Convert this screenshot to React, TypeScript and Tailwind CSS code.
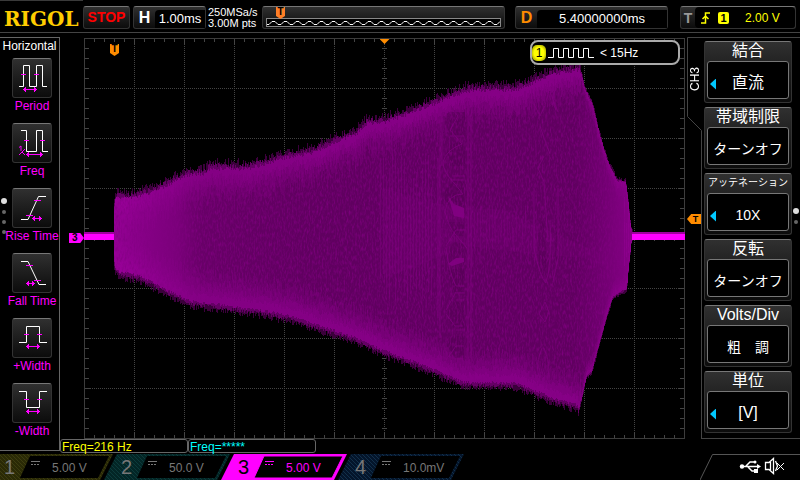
import type { ReactNode } from "react";

type Point = [number, number];

const UPPER: Point[] = [
  [30, 172], [31, 160], [33, 156], [46, 157], [69, 151], [86, 142], [103, 134], [121, 132],
  [126, 127], [163, 127], [183, 122], [203, 116], [229, 111], [249, 102], [273, 92], [283, 82],
  [296, 82], [323, 73], [351, 62], [383, 49], [434, 48], [449, 41], [469, 33], [496, 28],
  [501, 49], [509, 66], [516, 96], [524, 122], [533, 141], [542, 143], [544, 158], [547, 188], [550, 198],
];

const LOWER: Point[] = [
  [30, 226], [32, 235], [36, 238], [56, 242], [81, 255], [106, 267], [131, 270], [176, 276],
  [206, 282], [246, 295], [281, 307], [296, 315], [323, 325], [349, 335], [379, 348], [433, 349],
  [469, 364], [493, 371], [495, 375], [500, 352], [503, 339], [508, 335], [514, 312], [523, 279],
  [529, 260], [543, 252], [545, 229], [548, 202], [550, 200],
];

function levelAt(points: Point[], x: number): number {
  for (let i = 1; i < points.length; i++) {
    const [x0, y0] = points[i - 1];
    const [x1, y1] = points[i];
    if (x <= x1) return y0 + ((y1 - y0) * (x - x0)) / (x1 - x0);
  }
  return points[points.length - 1][1];
}

function randomSource(seed: number) {
  let state = seed;
  return () => {
    state = (state * 1664525 + 1013904223) % 4294967296;
    return state / 4294967296;
  };
}

function band(inset: number, jitter: number, seed: number): string {
  const random = randomSource(seed);
  let d = "";
  for (let x = 30; x < 550; x++) {
    const side = x > 496 ? 0.45 : 1;
    const top = levelAt(UPPER, x + 0.5) + (inset + (random() - 0.6) * jitter) * side;
    const bottom = levelAt(LOWER, x + 0.5) - (inset + (random() - 0.5) * jitter * 0.7) * side;
    if (bottom > top) d += `M${x} ${top.toFixed(1)}h1V${bottom.toFixed(1)}h-1z`;
  }
  return d;
}

const LAYERS = [
  { fill: "#3b003b", d: band(-2, 8, 11) },
  { fill: "#650065", d: band(1, 5, 23) },
  { fill: "#860086", d: band(4, 4, 37) },
  { fill: "#7e007e", d: band(12, 7, 41) },
  { fill: "#740074", d: band(18, 9, 53) },
  { fill: "#6a006a", d: band(25, 12, 67) },
  { fill: "#600060", d: band(34, 16, 71) },
];

function streaks(from: number, to: number, step: number, top: number, bottom: number, seed: number): string {
  const random = randomSource(seed);
  let d = "";
  for (let x = from; x < to; x += step) {
    const a = top + random() * 40;
    const b = bottom - random() * 40;
    d += `M${x + 0.5} ${a.toFixed(0)}V${b.toFixed(0)}`;
  }
  return d;
}

const SMALL_STEPS_X = Array.from({ length: 59 }, (_, i) => (i + 1) * 10 + 0.5);
const SMALL_STEPS_Y = Array.from({ length: 39 }, (_, i) => (i + 1) * 10 + 0.5);
const isMajor = (v: number) => (v - 0.5) % 50 === 0;

const TICKS =
  SMALL_STEPS_X.map((x) => {
    const n = isMajor(x) ? 6 : 4;
    return `M${x} 0v${n}M${x} 401v-${n}M${x} 198v5`;
  }).join("") +
  SMALL_STEPS_Y.map((y) => {
    const n = isMajor(y) ? 7 : 5;
    return `M0 ${y}h${n}M601 ${y}h-${n}M298 ${y}h5`;
  }).join("");

const DOTS =
  SMALL_STEPS_X.filter(isMajor).map((x) => `M${x} 0V401`).join("") +
  SMALL_STEPS_Y.filter(isMajor).map((y) => `M0 ${y}H601`).join("");

function Waveform() {
  return (
    <svg viewBox="0 0 601 401" preserveAspectRatio="none" className="block h-[401px] w-full" aria-label="Channel 3 trace">
      <defs>
        <filter id="grain" x="0" y="0" width="1" height="1">
          <feTurbulence type="fractalNoise" baseFrequency="0.6 0.22" numOctaves="2" seed="4" />
          <feColorMatrix values="0 0 0 0 0.22  0 0 0 0 0  0 0 0 0 0.22  1.8 0 0 0 -0.76" />
          <feComposite operator="in" in2="SourceGraphic" />
        </filter>
        <linearGradient id="onset" gradientUnits="userSpaceOnUse" x1="30" x2="240" y1="0" y2="0">
          <stop offset="0" stopColor="#9c009c" stopOpacity="0.85" />
          <stop offset="0.3" stopColor="#8c008c" stopOpacity="0.6" />
          <stop offset="0.42" stopColor="#800080" stopOpacity="0.25" />
          <stop offset="1" stopColor="#700070" stopOpacity="0" />
        </linearGradient>
        <linearGradient id="tail" gradientUnits="userSpaceOnUse" x1="490" x2="546" y1="0" y2="0">
          <stop offset="0" stopColor="#800080" stopOpacity="0" />
          <stop offset="1" stopColor="#900090" stopOpacity="0.8" />
        </linearGradient>
        <clipPath id="body">
          <path d={LAYERS[2].d} />
        </clipPath>
      </defs>
      <path d={DOTS} stroke="#444" strokeDasharray="1 1" fill="none" shapeRendering="crispEdges" />
      <path d={TICKS} stroke="#444" fill="none" shapeRendering="crispEdges" />
      <rect x="0.5" y="0.5" width="600" height="400" fill="none" stroke="#3c3c3c" shapeRendering="crispEdges" />
      <g shapeRendering="crispEdges">
        {LAYERS.map((layer) => (
          <path key={layer.fill} d={layer.d} fill={layer.fill} />
        ))}
      </g>
      <g clipPath="url(#body)">
        <rect x="30" y="100" width="210" height="210" fill="url(#onset)" />
        <rect x="490" y="60" width="60" height="280" fill="url(#tail)" />
        <path d="M300 150L350 165L384 170L420 172L470 195L515 215L540 170V240L500 220L440 215L384 208L300 240Z" fill="#7c007c" opacity="0.22" />
        <path d={streaks(296, 350, 3, 110, 270, 5)} stroke="#7c007c" opacity="0.5" fill="none" />
        <path d={streaks(384, 452, 3, 165, 230, 9)} stroke="#7c007c" opacity="0.4" fill="none" />
        <path d={streaks(540, 548, 2, 150, 250, 3)} stroke="#960096" opacity="0.5" fill="none" />
        <path
          d="M365 74q-6 6-3 14l6 10h13V74zM368 104l-5 10l6 14h12v-22zM370 142l-10 12q-2 8 8 14h12v-24zM362 184l8 14h10v-14zM370 204l-7 12l6 2l11-4v-8zM364 232l6 22h10v-24zM370 264l-8 12l8 14h10v-26zM369 298l-6 10l8 12h9v-22z"
          fill="#560056"
          opacity="0.6"
        />
        <path d="M459 180l3 20v28l-3 10l-5-12v-30zM472 184l2 18v22l-4-6z" fill="#560056" opacity="0.6" />
        <g fill="none" stroke="#7e007e" opacity="0.8">
          <path d="M360 78q6-12 14 0l-8 14l12 14q-16 6-19 18q0 10 12 22l8 10q-16 0-18 18q4 16 10 22l12 14M366 98h14M368 138h13M368 142h12M358 68v60M384 60v280M387 80v240M356 100v200M354 120v160" />
          <path d="M362 208l10-16h9M362 210q4 28 10 38h8M372 255h9M372 262h8M362 272l10-18M362 276l9 12h8M372 292h9M362 322l10-14h8M362 326l8 16h9" />
          <path d="M452 56q6-12 12 0q-2 12-8 22l-6-12M466 54l8 20M472 50q-6 12 0 22M456 88l4 12l6 16M460 118l-6 12l6 14l4 60M450 150v60q6 30 12 35q6-20 4-60M474 150v70l-5 24M461 264l-6 12l6 8l4-10zM458 310q-10 24 2 38q10-14 0-38" />
        </g>
        <path d="M364 158l6 8l10 4v10l-10-2zM364 226l8-6h8v4l-12 4z" fill="#8c008c" opacity="0.7" />
        <path d={LAYERS[1].d} fill="#fff" filter="url(#grain)" />
      </g>
      <g shapeRendering="crispEdges">
        <path d="M0 194h30v2H0zM548 194h53v2h-53z" fill="#a000a0" />
        <path d="M0 196h30v6H0zM548 196h53v6h-53z" fill="#ff00ff" />
      </g>
    </svg>
  );
}

function Arrow({ from, to, y }: { from: number; to: number; y: number }) {
  return (
    <path
      d={`M${from} ${y + 0.5}H${to}M${from + 2.5} ${y - 2}v5M${from + 1.5} ${y - 1}v3M${to - 2.5} ${y - 2}v5M${to - 1.5} ${y - 1}v3`}
      stroke="#ff00ff"
      fill="none"
      shapeRendering="crispEdges"
    />
  );
}

function Glyph({ line, ticks, arrow, children }: { line: string; ticks: string; arrow: [number, number, number]; children?: ReactNode }) {
  return (
    <svg viewBox="0 0 38 38" className="size-[38px]" aria-hidden="true">
      <g transform="translate(-1 -1)">
        <path d={line} stroke="#fff" fill="none" />
        <path d={ticks} stroke="#ff00ff" fill="none" shapeRendering="crispEdges" />
        <Arrow from={arrow[0]} to={arrow[1]} y={arrow[2]} />
        {children}
      </g>
    </svg>
  );
}

const MEASURES: { label: string; glyph: ReactNode }[] = [
  {
    label: "Period",
    glyph: <Glyph line="M7 28.5H11.5V7.5H17.5V28.5H24.5V7.5H30.5V28.5H35" ticks="M9 16.5h5M22 16.5h5" arrow={[11, 25, 31]} />,
  },
  {
    label: "Freq",
    glyph: (
      <Glyph line="M9 7.5H14.5V28.5H24.5V7.5H30.5V28.5H36" ticks="M12 17.5h5M28 17.5h5" arrow={[14, 31, 31]}>
        <path d="M7 24.500l2-1.500v5M7 32l6-6M10 29l3 3" stroke="#ff00ff" fill="none" />
      </Glyph>
    ),
  },
  {
    label: "Rise Time",
    glyph: <Glyph line="M9 31.5H16L26.500 8.500H34" ticks="M22 12.5h7M14 27.5h7" arrow={[20, 30, 30]} />,
  },
  {
    label: "Fall Time",
    glyph: <Glyph line="M9 8.500H16L27 31.500H34" ticks="M14 12.5h7M22 27.5h7" arrow={[14, 23, 30]} />,
  },
  {
    label: "+Width",
    glyph: <Glyph line="M7 24.5H14.5V8.5H27.5V24.5H35" ticks="M12 16.5h5M25 16.5h5" arrow={[14, 28, 28]} />,
  },
  {
    label: "-Width",
    glyph: <Glyph line="M7 8.5H14.5V24.5H27.5V8.5H35" ticks="M12 16.5h5M25 16.5h5" arrow={[14, 28, 28]} />,
  },
];

const MENU = [
  { title: "結合", value: "直流", size: "text-base", arrow: true },
  { title: "帯域制限", value: "ターンオフ", size: "text-sm", arrow: false },
  { title: "アッテネーション", value: "10X", size: "text-sm", arrow: true, small: true },
  { title: "反転", value: "ターンオフ", size: "text-sm", arrow: false },
  { title: "Volts/Div", value: "粗\u3000調", size: "text-sm", arrow: false },
  { title: "単位", value: "[V]", size: "text-base", arrow: true },
];

const CHANNELS = [
  { id: 1, scale: "5.00 V", base: "#2a2a06", stripe: "#3d3d10", edge: "#33330a", active: false },
  { id: 2, scale: "50.0 V", base: "#032626", stripe: "#0c3b3b", edge: "#063030", active: false },
  { id: 3, scale: "5.00 V", base: "#ff00ff", stripe: "#ff00ff", edge: "#ff00ff", active: true },
  { id: 4, scale: "10.0mV", base: "#04152b", stripe: "#12304a", edge: "#0a2440", active: false },
];

const PANEL = "rounded-[3px] border border-[#333] border-t-[#777] bg-linear-to-b from-[#303030] to-[#0c0c0c]";

function Readout({ tag, tagClass, width, children }: { tag: string; tagClass: string; width: string; children: ReactNode }) {
  return (
    <button type="button" className={`flex h-[23px] shrink-0 items-stretch ${width} ${PANEL}`}>
      <span className={`w-[21px] text-center text-base leading-[21px] font-bold ${tagClass}`}>{tag}</span>
      <span className="mt-[3px] flex flex-1 items-center justify-center rounded-tl-sm bg-black">{children}</span>
    </button>
  );
}

function Flag({ className }: { className: string }) {
  return (
    <span className={`flex h-[12px] w-[9px] justify-center text-[10px] leading-[10px] font-bold text-black [clip-path:polygon(0_0,100%_0,100%_75%,50%_100%,0_75%)] ${className}`}>
      T
    </span>
  );
}

function Header() {
  return (
    <header className="flex h-[33px] items-center border-b border-[#444] pr-1">
      <h1 className="flex h-full w-[83px] shrink-0 items-center border-t border-[#3a3a3a] pt-1 pl-1 font-['DejaVu_Serif',serif] text-[20px] font-bold text-[#fc0]">RIGOL</h1>
      <button type="button" className={`mt-[3px] h-[23px] w-[47px] shrink-0 text-sm leading-[21px] font-bold text-[#f00] ${PANEL}`}>STOP</button>
      <div className="mt-[3px] ml-[3px] flex flex-1 items-center">
        <Readout tag="H" tagClass="text-white" width="w-[73px]">
          <span className="text-[13px]">1.00ms</span>
        </Readout>
        <p className="ml-[2px] w-[54px] shrink-0 text-[11px] leading-[11px] whitespace-nowrap">
          250MSa/s
          <br />
          3.00M pts
        </p>
        <div className={`relative h-[23px] min-w-0 flex-1 px-[3px] pt-[11px] ${PANEL}`}>
          <svg className="block h-[9px] w-full border border-[#888] bg-black" aria-label="Memory">
            <defs>
              <pattern id="memory" width="12" height="7" patternUnits="userSpaceOnUse">
                <path d="M0 5.500H2L5 2.500H8L11 5.500H12" stroke="#fff" fill="none" />
              </pattern>
            </defs>
            <rect width="100%" height="7" fill="url(#memory)" />
          </svg>
          <Flag className="absolute top-0 left-[13px] bg-[#ff7f27]" />
        </div>
        <div className="ml-[10px] flex gap-3">
          <Readout tag="D" tagClass="text-[#ff8c00]" width="w-[153px]">
            <span className="text-[13px]">5.40000000ms</span>
          </Readout>
          <button type="button" className={`flex h-[23px] w-[116px] items-center text-[#ff0] ${PANEL}`}>
            <span className="w-[14px] text-center text-sm font-bold text-[#999]">T</span>
            <span className="flex h-full flex-1 items-center rounded-sm bg-black pl-[6px]">
              <svg viewBox="0 0 9 12" className="h-3 w-[9px]" aria-hidden="true">
                <path d="M0 11H4.500V1H9M1.500 7L4.500 4L7.500 7" stroke="#ff0" strokeWidth="1.500" fill="none" />
              </svg>
              <span className="ml-2 h-[12px] w-[11px] rounded-[2px] bg-[#ff0] text-center text-[11px] leading-[12px] font-bold text-black">1</span>
              <span className="ml-4 text-xs">2.00 V</span>
            </span>
          </button>
        </div>
      </div>
    </header>
  );
}

function Dots({ count, className }: { count: number; className: string }) {
  return (
    <div className={`absolute flex flex-col items-center gap-[6px] ${className}`} aria-hidden="true">
      <span className="size-[6px] rounded-full bg-[#ddd]" />
      {Array.from({ length: count }, (_, i) => (
        <span key={i} className="size-1 rounded-full bg-[#666]" />
      ))}
    </div>
  );
}

function Sidebar() {
  return (
    <aside className="relative mb-[2px] flex w-[60px] shrink-0 flex-col border-t border-r border-b border-[#666]">
      <h2 className="h-5 text-center text-xs leading-4">Horizontal</h2>
      <div className="-mb-2 flex flex-col items-center pl-[5px]">
        {MEASURES.map((m) => (
          <button type="button" key={m.label} className="flex h-[65px] flex-col items-center text-xs leading-4 whitespace-nowrap text-[#f0f]">
            <span className={`size-10 ${PANEL}`}>{m.glyph}</span>
            {m.label}
          </button>
        ))}
      </div>
      <Dots count={3} className="top-[160px] left-[1px]" />
    </aside>
  );
}

function Plot() {
  return (
    <section className="relative min-w-0 flex-1 pt-px pl-6">
      <Waveform />
      <span className="absolute top-[196px] left-[9px] flex h-[10px] w-[15px] bg-[#f0f] pl-[3px] text-[10px] leading-[10px] font-bold text-black [clip-path:polygon(0_0,75%_0,100%_50%,75%_100%,0_100%)]">3</span>
      <Flag className="absolute top-[7px] left-[50px] bg-[#ff8c00]" />
      <span className="absolute top-[2px] left-[calc(50%+12px)] h-[5px] w-[10px] -translate-x-1/2 bg-[#ff8c00] [clip-path:polygon(0_0,100%_0,50%_100%)]" />
      <div className="absolute top-[3px] right-[5px] flex h-[25px] w-[150px] items-center rounded-lg border-2 border-[#aaa] bg-black text-xs">
        <span className="h-4 w-[14px] rounded-[5px] bg-[radial-gradient(#ff0_50%,#770_100%)] text-center leading-4 text-black">1</span>
        <svg viewBox="0 0 46 12" className="ml-[2px] h-3 w-[46px]" aria-hidden="true">
          <path d="M0 10.5H5.500V1.500H10.500V10.500H15.500V1.500H20.500V10.500H25.500V1.500H30.500V10.500H35.500V1.500H40.500V10.500H46" stroke="#fff" fill="none" />
        </svg>
        <span className="ml-[6px]">&lt; 15Hz</span>
      </div>
    </section>
  );
}

function Menu() {
  return (
    <nav className="relative flex w-[113px] shrink-0" aria-label="CH3">
      <div className="relative w-[15px] shrink-0">
        <svg viewBox="0 0 15 402" className="block h-full w-[15px]" aria-hidden="true">
          <path d="M15 0.500H0.500V79.500L14.500 93.500V402" stroke="#444" fill="none" />
        </svg>
        <span className="absolute top-[30px] left-0 rotate-180 text-xs leading-[16px] [writing-mode:vertical-rl]">CH3</span>
        <span className="absolute top-[177px] left-0 flex h-[10px] w-[14px] justify-center bg-[#ff8c00] pl-[3px] text-[9px] leading-[10px] font-bold text-black [clip-path:polygon(0_50%,30%_0,100%_0,100%_100%,30%_100%)]">T</span>
      </div>
      <div className="flex flex-1 flex-col gap-1 border-t border-b border-[#444] pt-[3px] pr-2 pl-[2px]">
        {MENU.map((item) => (
          <button type="button" key={item.title} className={`flex h-[62px] flex-col px-[2px] ${PANEL}`}>
            <span className={`h-[19px] w-full text-center leading-[17px] whitespace-nowrap ${item.small ? "text-[10px]" : "text-base"}`}>{item.title}</span>
            <span className="relative flex h-[38px] w-full items-center justify-center rounded-[3px] border border-[#777] bg-black">
              {item.arrow && <span className="absolute left-[2px] mt-2 h-[11px] w-[6px] bg-[#00c8ff] [clip-path:polygon(0_50%,100%_0,100%_100%)]" />}
              <span className={`pt-[6px] leading-5 whitespace-nowrap ${item.size}`}>{item.value}</span>
            </span>
          </button>
        ))}
      </div>
      <Dots count={1} className="top-[171px] right-[1px]" />
    </nav>
  );
}

function ChannelTab({ channel }: { channel: (typeof CHANNELS)[number] }) {
  const { id, scale, base, stripe, edge, active } = channel;
  const ink = active ? "text-[#f0f]" : "text-[#777]";
  return (
    <button type="button" className={`relative -mr-[10px] h-[26px] w-[127px] shrink-0 text-left ${ink}`}>
      <svg viewBox="0 0 127 26" className="absolute inset-0 h-full w-full" aria-hidden="true">
        <defs>
          <pattern id={`hatch-${id}`} width="4" height="4" patternUnits="userSpaceOnUse">
            <rect width="4" height="4" fill={base} />
            <path d="M-1 -1L5 5M-1 3L1 5M3 -1L5 1" stroke={stripe} />
          </pattern>
        </defs>
        <path d="M13 0H126L113 26H0Z" fill={`url(#hatch-${id})`} />
        <path d="M43 2H122L111 24H33Z" fill="#000" stroke={edge} strokeWidth={active ? 1 : 0} />
      </svg>
      <span className="relative flex h-full items-center">
        <span className={`ml-[17px] w-[27px] text-xl leading-6 ${active ? "text-black" : ""}`}>{id}</span>
        <svg viewBox="0 0 9 6" className="-mt-[6px] h-[6px] w-[9px]" aria-hidden="true">
          <path d="M0 0.500H9M0 3.500H2M3 3.500H5M6 3.500H8" stroke="currentColor" fill="none" shapeRendering="crispEdges" />
        </svg>
        <span className="ml-3 pt-[2px] text-xs">{scale}</span>
      </span>
    </button>
  );
}

function Footer() {
  return (
    <footer className="mt-px flex h-[26px] justify-between overflow-hidden">
      <div className="-ml-[13px] flex">
        {CHANNELS.map((c) => (
          <ChannelTab key={c.id} channel={c} />
        ))}
      </div>
      <svg viewBox="0 0 100 26" className="h-[26px] w-[100px]" aria-label="USB connected, sound off">
        <path d="M0 26L12.500 0.500H100" stroke="#555" fill="none" />
        <g stroke="#fff" fill="none" strokeWidth="1.500">
          <path d="M41 12.500H59M46 12L50 8H54M48 13L52 17H55" />
        </g>
        <circle cx="42" cy="12.500" r="2.200" fill="#fff" />
        <path d="M57 10L61 12.500L57 15ZM54 15h4v4h-4z" fill="#fff" />
        <circle cx="55" cy="8" r="1.500" fill="#fff" />
        <path d="M65.500 8.500H69L73.500 4.500V19.500L69 15.500H65.500ZM70.500 8V16M75.500 7L77.500 12L75.500 17" stroke="#fff" fill="none" strokeWidth="1.300" />
        <path d="M77 9L84 16M84 9L77 16" stroke="#fff" />
      </svg>
    </footer>
  );
}

export default function App() {
  return (
    <main className="min-h-screen overflow-hidden bg-black font-['Liberation_Sans','Noto_Sans_CJK_JP',sans-serif] text-white">
      <Header />
      <div className="mt-1 flex">
        <Sidebar />
        <div className="min-w-0 flex-1">
          <div className="flex gap-[2px]">
            <Plot />
            <Menu />
          </div>
          <dl className="flex h-[14px] text-xs leading-[14px]">
            <div className="flex w-32 rounded-[3px] border border-[#666] pl-px leading-[14px] text-[#ff0]">
              <dt>Freq=</dt>
              <dd>216 Hz</dd>
            </div>
            <div className="flex w-32 rounded-[3px] border border-[#666] pl-px leading-[14px] text-[#0ff]">
              <dt>Freq=</dt>
              <dd>*****</dd>
            </div>
          </dl>
        </div>
      </div>
      <Footer />
    </main>
  );
}
